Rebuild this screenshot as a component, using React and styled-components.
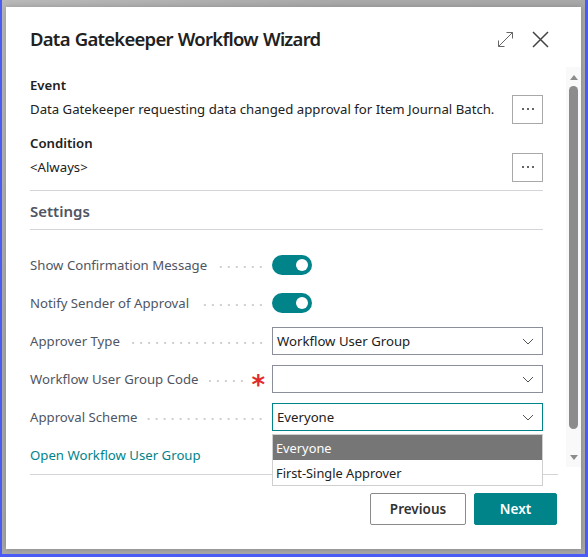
import React from "react"
import styled, { createGlobalStyle } from "styled-components"

const GlobalStyle = createGlobalStyle`
  html, body {
    margin: 0;
    padding: 0;
    width: 588px;
    height: 557px;
    overflow: hidden;
  }
  body {
    font-family: "Noto Sans", "Open Sans", sans-serif;
    color: #212121;
  }
  * { box-sizing: border-box; }
`

const teal = "#00848a"

const Frame = styled.div`
  width: 588px;
  height: 557px;
  border-left: 2px solid #4b5cf6;
  border-right: 3px solid #4b5cf6;
  border-bottom: 3px solid #4b5cf6;
  background: linear-gradient(135deg, #b9b9b9 0%, #a9a9a9 30%, #a6a6a6 100%);
  padding: 7px 4px 5px 4px;
  display: flex;
`

const Dialog = styled.div`
  flex: 1;
  background: #ffffff;
  display: flex;
  flex-direction: column;
  box-shadow: 0 0 6px rgba(0, 0, 0, 0.2);
`

const Header = styled.div`
  display: flex;
  align-items: center;
  padding: 11px 32px 0 24px;
  height: 53px;
`

const Title = styled.h1`
  flex: 1;
  margin: 0;
  font-size: 18.5px;
  line-height: 28px;
  font-weight: 600;
  color: #212121;
  letter-spacing: -0.75px;
  word-spacing: 1px;
`

const IconButton = styled.button`
  border: 0;
  background: none;
  padding: 0;
  margin-left: ${p => p.$gap || 0}px;
  width: 18px;
  height: 18px;
  display: flex;
  align-items: center;
  justify-content: center;
  color: #505050;
`

const Body = styled.div`
  flex: 1;
  display: flex;
  min-height: 0;
  padding-top: 15px;
`

const Content = styled.div`
  flex: 1;
  padding-left: 24px;
  padding-right: 23px;
  position: relative;
  font-size: 13.2px;
`

const FieldLabel = styled.div`
  font-size: 13.2px;
  font-weight: 600;
  line-height: 20px;
  height: 20px;
  margin-top: ${p => p.$top || 0}px;
`

const ValueRow = styled.div`
  display: flex;
  align-items: center;
  justify-content: space-between;
  height: 28px;
  white-space: nowrap;
`

const MoreButton = styled.div`
  width: 31px;
  height: 29px;
  flex: none;
  border: 1px solid #a8a8a8;
  display: flex;
  align-items: center;
  justify-content: center;
  gap: 3px;
  span {
    width: 2px;
    height: 2px;
    border-radius: 50%;
    background: #333;
  }
`

const Divider = styled.div`
  height: 1px;
  background: #d4d4d8;
  margin-top: ${p => p.$top || 0}px;
  margin-right: ${p => p.$extend ? -15 : 0}px;
`

const SectionTitle = styled.div`
  font-size: 15px;
  font-weight: 600;
  line-height: 20px;
  color: #505562;
  margin-top: 10px;
  margin-bottom: 8px;
`

const Rows = styled.div`
  display: flex;
  flex-direction: column;
  gap: 10px;
  margin-top: 21px;
`

const Row = styled.div`
  display: grid;
  grid-template-columns: 242px 1fr;
  height: 28px;
  align-items: center;
  position: relative;
`

const Label = styled.div`
  display: flex;
  align-items: center;
  color: #4f5563;
  padding-right: 7px;
  white-space: nowrap;
`

const Leader = styled.div`
  flex: 1;
  height: 2px;
  margin-left: 10px;
  margin-top: 3px;
  background-image: radial-gradient(circle, #cfcfcf 1px, transparent 1.2px);
  background-size: 8px 2px;
  background-position: right center;
`

const Required = styled.span`
  color: #e22c2c;
  font-size: 26px;
  line-height: 20px;
  height: 20px;
  margin-left: 6px;
  padding-top: 6px;
  font-weight: 600;
  font-family: "DejaVu Sans", sans-serif;
`

const Toggle = styled.div`
  width: 40px;
  height: 20px;
  border-radius: 10px;
  background: ${teal};
  position: relative;
  &::after {
    content: "";
    position: absolute;
    right: 4px;
    top: 4px;
    width: 12px;
    height: 12px;
    border-radius: 50%;
    background: #fff;
  }
`

const Select = styled.div`
  height: 28px;
  border: 1px solid ${p => p.$focused ? teal : "#8a8f9a"};
  display: flex;
  align-items: center;
  justify-content: space-between;
  padding: 0 8px 0 4px;
  color: #212121;
  position: relative;
`

const Menu = styled.div`
  position: absolute;
  left: 242px;
  right: 0;
  top: 31px;
  background: #fff;
  border: 1px solid #cfcfcf;
  z-index: 2;
`

const MenuItem = styled.div`
  height: 25px;
  display: flex;
  align-items: center;
  padding-left: 3px;
  font-size: 12.8px;
  background: ${p => p.$active ? "#767676" : "#fff"};
  color: ${p => p.$active ? "#fff" : "#212121"};
`

const LinkRow = styled.div`
  height: 28px;
  display: flex;
  align-items: center;
  margin-top: 10px;
  color: ${teal};
`

const Scrollbar = styled.div`
  width: 15px;
  margin-top: -8px;
  height: 400px;
  background: #f9f9f9;
  display: flex;
  flex-direction: column;
  align-items: center;
  padding-top: 8px;
`

const Arrow = styled.div`
  width: 0;
  height: 0;
  border-left: 4.5px solid transparent;
  border-right: 4.5px solid transparent;
  ${p => p.$down
    ? "border-top: 5px solid #8c8c8c;"
    : "border-bottom: 5px solid #8c8c8c;"}
`

const Thumb = styled.div`
  width: 9px;
  height: 343px;
  margin: 6px 0 26px;
  border-radius: 5px;
  background: #8c8c8c;
`

const Footer = styled.div`
  display: flex;
  justify-content: flex-end;
  gap: 8px;
  padding: 20px 24px 24px;
`

const Button = styled.button`
  height: 32px;
  min-width: ${p => p.$primary ? 83 : 96}px;
  padding: 0 18px;
  border-radius: 2px;
  font-family: inherit;
  font-size: 13.5px;
  font-weight: 600;
  border: 1px solid ${p => p.$primary ? teal : "#8a8a8a"};
  background: ${p => p.$primary ? teal : "#fff"};
  color: ${p => p.$primary ? "#fff" : "#333"};
`

const Chevron = () => (
  <svg width="12" height="7" viewBox="0 0 12 7" fill="none">
    <path d="M1 1l5 5 5-5" stroke="#555" strokeWidth="1" />
  </svg>
)

const settings = [
  { label: "Show Confirmation Message", type: "toggle" },
  { label: "Notify Sender of Approval", type: "toggle" },
  { label: "Approver Type", type: "select", value: "Workflow User Group" },
  { label: "Workflow User Group Code", type: "select", value: "", required: true },
  { label: "Approval Scheme", type: "select", value: "Everyone", focused: true, open: true },
]

export default function App() {
  return (
    <>
      <GlobalStyle />
      <Frame>
        <Dialog>
          <Header>
            <Title>Data Gatekeeper Workflow Wizard</Title>
            <IconButton>
              <svg width="17" height="17" viewBox="0 0 17 17" fill="none" stroke="#666" strokeWidth="1">
                <path d="M1.5 15.5L15.5 1.5M9.5 1.5h6v6M1.5 9.5v6h6" />
              </svg>
            </IconButton>
            <IconButton $gap={17}>
              <svg width="17" height="17" viewBox="0 0 17 17" fill="none" stroke="#444" strokeWidth="1.5">
                <path d="M1 1l15 15M16 1L1 16" />
              </svg>
            </IconButton>
          </Header>
          <Body>
            <Content>
              <FieldLabel>Event</FieldLabel>
              <ValueRow>
                Data Gatekeeper requesting data changed approval for Item Journal Batch.
                <MoreButton><span /><span /><span /></MoreButton>
              </ValueRow>
              <FieldLabel $top={10}>Condition</FieldLabel>
              <ValueRow>
                &lt;Always&gt;
                <MoreButton><span /><span /><span /></MoreButton>
              </ValueRow>
              <Divider $top={9} />
              <SectionTitle>Settings</SectionTitle>
              <Divider />
              <Rows>
                {settings.map(s => (
                  <Row key={s.label}>
                    <Label>
                      {s.label}
                      <Leader />
                      {s.required && <Required>*</Required>}
                    </Label>
                    {s.type === "toggle" ? (
                      <Toggle />
                    ) : (
                      <Select $focused={s.focused}>
                        <span>{s.value}</span>
                        <Chevron />
                      </Select>
                    )}
                    {s.open && (
                      <Menu>
                        <MenuItem $active>Everyone</MenuItem>
                        <MenuItem>First-Single Approver</MenuItem>
                      </Menu>
                    )}
                  </Row>
                ))}
              </Rows>
              <LinkRow>Open Workflow User Group</LinkRow>
              <Divider $top={5} $extend />
            </Content>
            <Scrollbar>
              <Arrow />
              <Thumb />
              <Arrow $down />
            </Scrollbar>
          </Body>
          <Footer>
            <Button>Previous</Button>
            <Button $primary>Next</Button>
          </Footer>
        </Dialog>
      </Frame>
    </>
  )
}
